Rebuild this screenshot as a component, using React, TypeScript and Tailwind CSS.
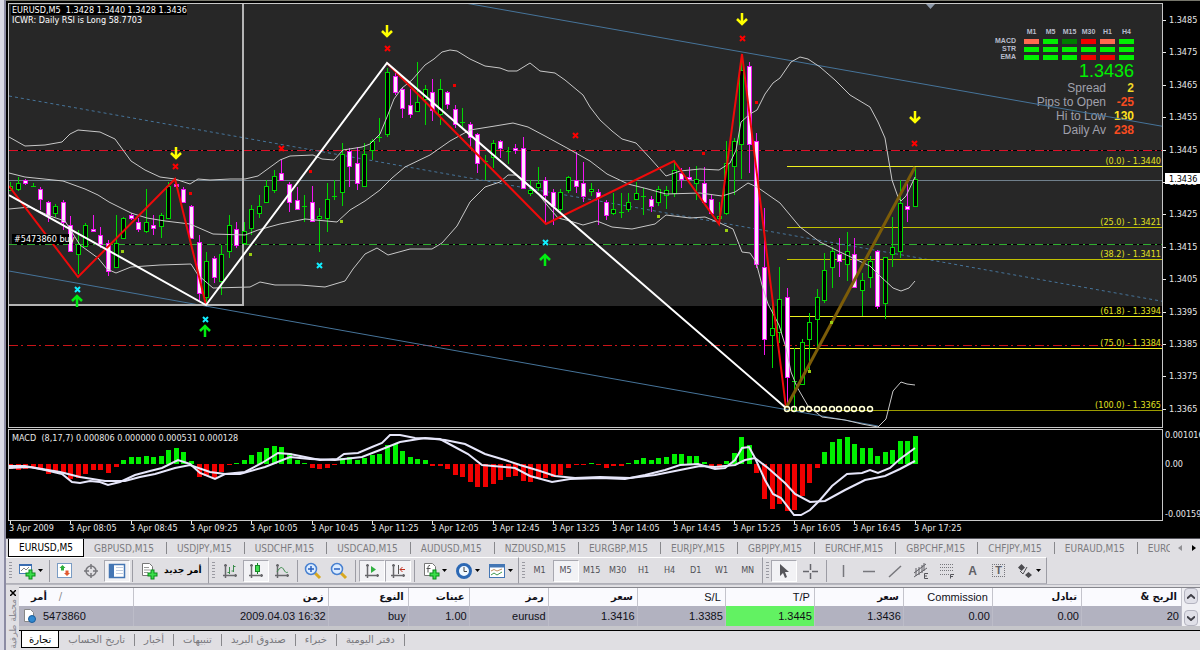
import type { ReactNode } from 'react';
import { clsx } from 'clsx';

type Point = [number, number];
// high, body top, body bottom, low, rising
type Candle = [number, number, number, number, 0 | 1];

const BAR_START = 10;
const BAR_STEP = 7.54;
const barX = (i: number) => Math.round(BAR_START + i * BAR_STEP);

const candles: Candle[] = [
  [182, 186, 190, 191, 1], [177, 183, 189, 191, 1], [179, 180, 183, 185, 0], [183, 186, 186, 187, 1],
  [187, 189, 199, 210, 0], [201, 202, 216, 222, 0], [204, 206, 213, 217, 1], [200, 202, 222, 230, 0],
  [216, 225, 251, 251, 0], [230, 244, 254, 274, 1], [223, 225, 246, 247, 1], [215, 229, 231, 231, 0],
  [227, 235, 244, 248, 0], [240, 243, 271, 276, 0], [215, 243, 267, 268, 1], [217, 218, 238, 239, 1],
  [213, 215, 218, 220, 0], [218, 222, 229, 232, 0], [189, 222, 231, 233, 1], [215, 225, 228, 235, 0],
  [213, 215, 226, 238, 1], [182, 186, 218, 218, 1], [183, 184, 186, 187, 0], [187, 189, 202, 203, 0],
  [205, 206, 238, 238, 0], [235, 242, 293, 302, 0], [252, 261, 297, 302, 1], [256, 258, 277, 283, 0],
  [245, 254, 281, 295, 1], [215, 225, 251, 258, 1], [222, 229, 245, 248, 0], [222, 231, 243, 245, 1],
  [205, 209, 228, 235, 1], [195, 206, 213, 218, 1], [180, 186, 202, 202, 1], [170, 176, 190, 193, 1],
  [159, 173, 180, 180, 0], [182, 184, 202, 212, 0], [187, 200, 209, 210, 0], [195, 206, 206, 222, 1],
  [186, 202, 221, 221, 0], [208, 216, 218, 252, 1], [183, 199, 218, 232, 1], [180, 196, 196, 200, 1],
  [143, 154, 192, 206, 1], [148, 151, 166, 187, 0], [147, 163, 183, 190, 0], [143, 154, 186, 187, 1],
  [139, 141, 150, 160, 1], [118, 137, 137, 142, 1], [68, 72, 134, 137, 1], [73, 76, 92, 95, 0],
  [87, 89, 108, 118, 0], [89, 105, 114, 118, 0], [62, 102, 111, 112, 1], [85, 89, 99, 125, 1],
  [79, 92, 110, 121, 0], [79, 89, 114, 125, 1], [91, 92, 104, 109, 0], [105, 109, 124, 128, 0],
  [108, 122, 122, 127, 1], [122, 124, 137, 147, 0], [133, 134, 163, 173, 0], [155, 161, 161, 180, 1],
  [140, 143, 157, 168, 1], [140, 141, 148, 158, 0], [147, 151, 151, 164, 1], [144, 148, 150, 154, 0],
  [137, 148, 188, 188, 0], [180, 190, 193, 196, 1], [167, 183, 187, 191, 1], [177, 180, 195, 223, 0],
  [189, 192, 206, 225, 0], [189, 192, 209, 212, 1], [176, 177, 190, 193, 1], [152, 180, 186, 193, 0],
  [162, 183, 196, 202, 0], [183, 189, 191, 196, 1], [189, 192, 197, 225, 0], [200, 202, 215, 220, 0],
  [193, 209, 213, 215, 1], [193, 212, 212, 218, 1], [193, 202, 209, 212, 1], [182, 193, 199, 200, 1],
  [188, 196, 196, 215, 1], [196, 199, 206, 212, 0], [186, 189, 202, 206, 1], [186, 190, 195, 209, 1],
  [162, 170, 193, 197, 1], [168, 173, 179, 188, 0], [167, 177, 179, 180, 0], [166, 179, 183, 200, 1],
  [167, 183, 202, 202, 0], [195, 199, 213, 214, 0], [202, 216, 218, 223, 1], [141, 163, 213, 215, 1],
  [138, 141, 166, 195, 1], [55, 70, 144, 179, 1], [62, 66, 144, 173, 0], [133, 141, 264, 268, 0],
  [208, 267, 339, 355, 0], [298, 328, 335, 368, 1], [267, 299, 332, 343, 1], [288, 297, 377, 407, 0],
  [348, 381, 381, 412, 1], [339, 342, 384, 385, 1], [313, 322, 339, 370, 1], [289, 297, 319, 348, 1],
  [253, 270, 300, 303, 1], [247, 251, 267, 288, 1], [238, 254, 261, 277, 0], [232, 251, 264, 281, 1],
  [238, 254, 287, 288, 0], [273, 280, 290, 316, 1], [256, 261, 277, 288, 1], [250, 251, 306, 309, 0],
  [257, 257, 303, 319, 1], [217, 247, 254, 267, 1], [180, 203, 251, 258, 1], [183, 206, 209, 222, 0],
  [167, 179, 206, 206, 1],
];

const upperBand: Point[] = [
  [9, 137], [25, 146], [45, 145], [62, 142], [70, 134], [78, 130], [100, 132], [115, 139], [131, 161], [145, 170],
  [160, 177], [175, 179], [190, 184], [198, 179], [210, 180], [230, 179], [245, 179], [258, 176], [280, 160],
  [290, 156], [313, 155], [322, 159], [334, 160], [343, 150], [362, 147], [370, 144], [380, 134], [387, 117],
  [394, 99], [402, 88], [412, 80], [425, 65], [434, 59], [442, 52], [450, 50], [457, 51], [470, 59], [485, 66],
  [500, 68], [508, 71], [517, 71], [530, 63], [540, 71], [555, 73], [565, 80], [583, 95], [590, 107], [600, 120],
  [612, 131], [622, 139], [636, 143], [650, 158], [666, 176], [680, 171], [700, 169], [719, 170], [730, 163],
  [736, 150], [741, 122], [750, 114], [757, 110], [765, 94], [773, 83], [780, 78], [791, 62], [800, 57],
  [808, 59], [820, 67], [835, 80], [850, 95], [870, 107], [878, 122], [885, 138], [892, 180], [898, 197],
  [901, 201], [906, 196], [915, 177],
];

const middleBand: Point[] = [
  [9, 173], [25, 177], [63, 181], [85, 189], [98, 195], [109, 202], [131, 213], [147, 218], [165, 221], [190, 224],
  [213, 234], [245, 235], [258, 230], [280, 224], [305, 219], [337, 222], [350, 210], [365, 201], [380, 190],
  [392, 178], [405, 167], [430, 155], [450, 141], [470, 130], [495, 126], [513, 123], [528, 127], [545, 136],
  [567, 148], [590, 161], [607, 174], [628, 184], [648, 189], [666, 194], [700, 193], [722, 196], [735, 192],
  [748, 183], [757, 187], [780, 203], [800, 227], [820, 242], [840, 252], [870, 266], [880, 276], [893, 288],
  [901, 291], [909, 288], [915, 281],
];

const lowerBand: Point[] = [
  [9, 209], [30, 207], [50, 216], [65, 221], [80, 245], [98, 258], [107, 269], [116, 273], [131, 267], [160, 265],
  [191, 264], [198, 275], [213, 288], [250, 287], [260, 282], [275, 285], [300, 285], [325, 287], [345, 281],
  [353, 269], [365, 254], [377, 248], [388, 255], [410, 249], [432, 249], [442, 243], [457, 226], [470, 202],
  [485, 187], [500, 182], [508, 175], [516, 175], [535, 190], [547, 205], [558, 218], [570, 221], [583, 225],
  [597, 221], [612, 227], [632, 229], [655, 224], [666, 215], [690, 218], [705, 217], [720, 223], [733, 229],
  [742, 252], [750, 253], [756, 262], [762, 285], [768, 304], [779, 325], [786, 348], [791, 372], [797, 387],
  [808, 406], [822, 417], [845, 420], [862, 424], [878, 427], [886, 419], [893, 391], [901, 382], [907, 384],
  [915, 385],
];

const whiteZigzag: Point[] = [[9, 195], [206, 305], [387, 63], [786, 408]];
const redSwings: Point[][] = [
  [[9, 186], [78, 277], [175, 179], [206, 305]],
  [[387, 63], [546, 224], [674, 161], [719, 224], [742, 54], [786, 408]],
];

const fibs = [
  { y: 166, label: '(0.0) - 1.3440', color: '#f0f020' },
  { y: 227, label: '(25.0) - 1.3421', color: '#c0c000' },
  { y: 259, label: '(38.2) - 1.3411', color: '#c0c000' },
  { y: 316, label: '(61.8) - 1.3394', color: '#f0f020' },
  { y: 348, label: '(75.0) - 1.3384', color: '#f0f020' },
  { y: 410, label: '(100.0) - 1.3365', color: '#9c9c00' },
];

const sellArrows: Point[] = [[176, 153], [387, 31], [742, 19], [915, 117]];
const buyArrows: Point[] = [[77, 300], [205, 330], [545, 259]];
const redCrosses: Point[] = [[175, 166], [281, 148], [387, 48], [575, 135], [742, 38], [914, 143]];
const cyanCrosses: Point[] = [[77, 289], [205, 319], [319, 265], [545, 242]];
const redDots: Point[] = [[190, 193], [310, 171], [454, 85], [703, 153], [756, 102]];
const limeDots: Point[] = [[122, 251], [250, 254], [341, 221], [658, 216], [726, 230], [809, 371], [831, 322]];

const macdBars = [
  -5, -6, -5, -4, -5, -10, -8, -9, -15, -14, -10, -6, -6, -9, -3, 4, 7, 7, 8, 7, 8, 14, 16, 12, 3, -13, -12, -14, -8,
  -1, 1, 4, 9, 12, 16, 18, 17, 11, 4, 1, -4, -5, -4, -1, 6, 7, 4, 6, 9, 10, 19, 20, 13, 7, 5, 4, -2, -2, -5, -11,
  -13, -18, -23, -23, -20, -16, -13, -12, -17, -18, -14, -14, -13, -11, -4, -1, -1, 1, -1, -4, -2, -2, 1, 4, 6, 4, 6,
  7, 10, 10, 8, 8, 2, -2, -4, 3, 11, 27, 19, -9, -35, -45, -40, -47, -46, -32, -19, -4, 12, 22, 25, 27, 20, 16, 16,
  8, 12, 14, 23, 23, 28,
];

const macdLine: Point[] = [
  [9, 466], [25, 466], [45, 470], [62, 474], [72, 482], [80, 483], [90, 481], [100, 482], [108, 485], [120, 482],
  [135, 475], [150, 471], [162, 468], [178, 460], [190, 464], [200, 473], [215, 479], [225, 474], [245, 472],
  [262, 463], [278, 453], [290, 454], [305, 457], [320, 460], [337, 459], [344, 454], [358, 453], [372, 447],
  [382, 443], [390, 435], [400, 435], [415, 438], [440, 439], [453, 446], [468, 454], [482, 465], [515, 468],
  [530, 476], [552, 482], [570, 479], [600, 478], [625, 479], [645, 475], [665, 470], [680, 465], [698, 464],
  [715, 469], [725, 468], [735, 460], [742, 448], [749, 447], [755, 458], [765, 480], [773, 494], [781, 498],
  [794, 515], [801, 515], [810, 510], [820, 500], [832, 486], [847, 474], [862, 473], [870, 470], [878, 473],
  [890, 468], [900, 459], [915, 448],
];

const signalLine: Point[] = [
  [9, 468], [30, 467], [60, 472], [80, 477], [105, 481], [125, 481], [140, 477], [155, 474], [175, 468], [190, 465],
  [210, 472], [225, 474], [240, 474], [265, 467], [290, 457], [310, 459], [335, 460], [362, 457], [380, 450],
  [400, 442], [425, 438], [445, 440], [465, 444], [485, 454], [505, 460], [520, 465], [540, 471], [555, 476],
  [575, 478], [600, 477], [630, 478], [655, 475], [680, 470], [700, 466], [715, 467], [735, 465], [745, 460],
  [755, 458], [768, 468], [785, 483], [795, 494], [810, 502], [825, 501], [845, 490], [865, 480], [885, 476],
  [900, 469], [915, 461],
];

const times = [
  '3 Apr 2009', '3 Apr 08:05', '3 Apr 08:45', '3 Apr 09:25', '3 Apr 10:05', '3 Apr 10:45', '3 Apr 11:25', '3 Apr 12:05',
  '3 Apr 12:45', '3 Apr 13:25', '3 Apr 14:05', '3 Apr 14:45', '3 Apr 15:25', '3 Apr 16:05', '3 Apr 16:45', '3 Apr 17:25',
];

const prices = [
  '1.3485', '1.3475', '1.3465', '1.3455', '1.3445', '1.3435', '1.3425', '1.3415', '1.3405', '1.3395', '1.3385', '1.3375',
  '1.3365',
];

const path = (points: Point[]) => points.map((p) => p.join(',')).join(' ');

const chartText = "font-['DejaVu_Sans_Condensed','DejaVu_Sans',sans-serif] text-[9px]";

function Cross({ at: [x, y], color }: { at: Point; color: string }) {
  return <path d={`M${x - 2} ${y - 2}l5 5m0 -5l-5 5`} stroke={color} strokeWidth="2" />;
}

function PriceChart() {
  return (
    <svg className={clsx('relative block h-full w-full overflow-hidden', chartText)} role="img" aria-label="EURUSD M5">
      <g transform="translate(-9 -4)" fill="none">
        <line x1="9" x2="110%" y1="180.5" y2="180.5" stroke="#70808c" />
        {[150, 345].map((y) => (
          <g key={y}>
            <line x1="9" x2="110%" y1={y + 0.5} y2={y + 0.5} stroke="#000" />
            <line x1="9" x2="110%" y1={y + 0.5} y2={y + 0.5} stroke={y === 150 ? '#e01028' : '#c81418'} strokeDasharray="9 3 2 4" />
          </g>
        ))}
        <line x1="9" x2="110%" y1="244.5" y2="244.5" stroke="#000" />
        <line x1="9" x2="110%" y1="244.5" y2="244.5" stroke="#2fae2f" strokeDasharray="8 4 2 4" />

        {/* regression channel */}
        <g stroke="#46749a">
          <line x1="465" y1="3" x2="1172" y2="128" />
          <line x1="9" y1="271" x2="878" y2="426" />
          <line x1="9" y1="96" x2="1172" y2="303" strokeDasharray="3 3" />
        </g>

        <path d="M9 305H243V4" stroke="#b4b4b4" strokeWidth="2" />

        {fibs.map((f) => (
          <line key={f.y} x1="787" x2="110%" y1={f.y + 0.5} y2={f.y + 0.5} stroke={f.color} />
        ))}

        <g shapeRendering="crispEdges">
          {candles.map(([high, top, bottom, low, up], i) => {
            const x = barX(i);
            const color = up ? '#00d800' : '#f414f4';
            return (
              <g key={i} stroke={color}>
                <line x1={x + 0.5} x2={x + 0.5} y1={high} y2={low} />
                {top === bottom ? (
                  <line x1={x - 2} x2={x + 3} y1={top + 0.5} y2={top + 0.5} />
                ) : (
                  <rect x={x - 1.5} y={top + 0.5} width="4" height={bottom - top} fill={up ? '#000' : '#ffe4ff'} />
                )}
              </g>
            );
          })}
        </g>

        <g stroke="#c8c8c8">
          <polyline points={path(upperBand)} />
          <polyline points={path(middleBand)} />
          <polyline points={path(lowerBand)} />
        </g>

        {redSwings.map((swing, i) => <polyline key={i} points={path(swing)} stroke="#ee0a0a" strokeWidth="2" />)}
        <polyline points={path(whiteZigzag)} stroke="#fff" strokeWidth="2" />
        <line x1="786" y1="408" x2="915" y2="167" stroke="#7c5c08" strokeWidth="3" />

        {Array.from({ length: 12 }, (_, i) => (
          <circle key={i} cx={barX(103 + i)} cy="409" r="2.5" stroke="#ffffd8" strokeWidth="1.5" />
        ))}

        {sellArrows.map(([x, y]) => (
          <path key={x} d={`M${x} ${y - 6}v10M${x - 5} ${y}l5 5l5 -5`} stroke="#ff0" strokeWidth="2.5" />
        ))}
        {buyArrows.map(([x, y]) => (
          <path key={x} d={`M${x} ${y + 7}v-10M${x - 5} ${y + 1}l5 -5l5 5`} stroke="#0e1" strokeWidth="2.5" />
        ))}
        {redCrosses.map((p) => <Cross key={p[0]} at={p} color="#f00" />)}
        {cyanCrosses.map((p) => <Cross key={p[0]} at={p} color="#1ef" />)}
        {redDots.map(([x, y]) => <rect key={x} x={x - 1} y={y - 1} width="3" height="3" fill="#e00" />)}
        {limeDots.map(([x, y]) => <rect key={x} x={x - 1} y={y - 1} width="3" height="3" fill="#9c1" />)}
        <path d="M926 4h9l-4.500 5z" fill="#8c98a8" />

        <rect x="11" y="5" width="176" height="10" fill="#000" />
        <rect x="12" y="234" width="57" height="10" fill="#000" />
        <g fill="#fff">
          <text x="12" y="13" xmlSpace="preserve">EURUSD,M5  1.3428 1.3440 1.3428 1.3436</text>
          <text x="12" y="23">ICWR: Daily RSI is Long 58.7703</text>
          <text x="14" y="242">#5473860 buy</text>
        </g>
      </g>
      <g transform="translate(-1 -4)" fill="#e0e020" textAnchor="end">
        {fibs.map((f) => <text key={f.y} x="100%" y={f.y - 2}>{f.label}</text>)}
      </g>
    </svg>
  );
}

const signals = [
  { name: 'MACD', cells: ['bg-[#ff6a50]', 'bg-[#00f000]', 'bg-[#007c00]', 'bg-[#f00000]', 'bg-[#ff6a50]', 'bg-[#00f000]'] },
  { name: 'STR', cells: ['bg-[#00f000]', 'bg-[#00f000]', 'bg-[#00f000]', 'bg-[#00f000]', 'bg-[#00f000]', 'bg-[#00f000]'] },
  { name: 'EMA', cells: ['bg-[#00f000]', 'bg-[#00f000]', 'bg-[#00f000]', 'bg-[#f00000]', 'bg-[#f00000]', 'bg-[#00f000]'] },
];

const stats = [
  { label: 'Spread', value: '2', color: 'text-[#f0d828]' },
  { label: 'Pips to Open', value: '-25', color: 'text-[#f84c20]' },
  { label: 'Hi to Low', value: '130', color: 'text-[#ffe020]' },
  { label: 'Daily Av', value: '238', color: 'text-[#f84c20]' },
];

function SignalPanel() {
  return (
    <div className="absolute top-6 right-7 flex flex-col items-end font-['Liberation_Sans',sans-serif]">
      <div className="grid grid-cols-[30px_repeat(6,15px)] gap-x-1 text-[7px] leading-[8px] font-bold text-[#b8bccc]">
        <span />
        {['M1', 'M5', 'M15', 'M30', 'H1', 'H4'].map((tf) => (
          <span key={tf} className="pb-px text-center">{tf}</span>
        ))}
        {signals.map((row) => (
          <div key={row.name} className="contents">
            <span className="pr-1 text-right">{row.name}</span>
            {row.cells.map((c, i) => <span key={i} className={clsx('mt-[2px] h-[5px]', c)} />)}
          </div>
        ))}
      </div>
      <div className="text-lg leading-[20px] text-[#00f000]">1.3436</div>
      <dl className="grid grid-cols-[auto_20px] gap-x-2 text-right text-xs leading-[14px] text-[#a0a0ac]">
        {stats.map((s) => (
          <div key={s.label} className="contents">
            <dt>{s.label}</dt>
            <dd className={clsx('font-bold', s.color)}>{s.value}</dd>
          </div>
        ))}
      </dl>
    </div>
  );
}

function PriceAxis() {
  return (
    <svg className={clsx('block h-[425px] w-[37px] shrink-0', chartText)} fill="#e8e8e8">
      {prices.map((p, i) => {
        const y = Math.round(17 + i * 32.4);
        return (
          <g key={p}>
            <rect x="0" y={y} width="3" height="1" />
            <text x="6" y={y + 3}>{p}</text>
          </g>
        );
      })}
      <rect x="2" y="170" width="35" height="11" fill="#fff" />
      <text x="6" y="179" fill="#000">1.3436</text>
    </svg>
  );
}

function MacdChart() {
  return (
    <svg className={clsx('block h-full w-full overflow-hidden', chartText)} role="img" aria-label="MACD">
      <g transform="translate(-9 -430)">
        {macdBars.map((v, i) => (
          <rect
            key={i}
            x={barX(i) - 2}
            y={v > 0 ? 464 - v : 464}
            width="5"
            height={Math.abs(v)}
            fill={v > 0 ? '#00f000' : '#f00000'}
          />
        ))}
        <g fill="none" stroke="#e6e6fa" strokeWidth="2">
          <polyline points={path(macdLine)} />
          <polyline points={path(signalLine)} />
        </g>
        <text x="12" y="441" fill="#e8e8e8" xmlSpace="preserve">MACD  (8,17,7) 0.000806 0.000000 0.000531 0.000128</text>
      </g>
    </svg>
  );
}

function Chart() {
  return (
    <section className="border-t border-[#77776c] bg-black pt-[2px] pl-[2px]">
      <div className="flex">
        <div className="relative h-[425px] min-w-0 flex-1 border border-[#c8c8c8] bg-[linear-gradient(#272727_302px,#000_302px)]">
          <SignalPanel />
          <PriceChart />
        </div>
        <PriceAxis />
      </div>
      <div className="mt-px flex">
        <div className="h-[92px] min-w-0 flex-1 border border-[#c8c8c8]">
          <MacdChart />
        </div>
        <div className={clsx('flex h-[92px] w-[37px] shrink-0 flex-col justify-between overflow-hidden whitespace-nowrap pb-px pl-[2px] leading-[12px] text-[#e8e8e8]', chartText)}>
          <span>0.001016</span>
          <span className="pb-[22px]">0.00</span>
          <span>-0.00159</span>
        </div>
      </div>
      <svg className={clsx('block h-[17px] w-full', chartText)} fill="#e8e8e8">
        {times.map((t, i) => (
          <g key={t}>
            <rect x={barX(i * 8) - 8} y="0" width="1" height="3" />
            <text x={barX(i * 8) - 9} y="10">{t}</text>
          </g>
        ))}
      </svg>
    </section>
  );
}

const symbols = [
  'EURUSD,M5', 'GBPUSD,M15', 'USDJPY,M15', 'USDCHF,M15', 'USDCAD,M15', 'AUDUSD,M15', 'NZDUSD,M15', 'EURGBP,M15',
  'EURJPY,M15', 'GBPJPY,M15', 'EURCHF,M15', 'GBPCHF,M15', 'CHFJPY,M15', 'EURAUD,M15', 'EURCAD,M15',
];

function SymbolTabs() {
  return (
    <nav className="flex h-[19px] border-t border-[#55555c] pl-[2px] font-['DejaVu_Sans_Condensed','DejaVu_Sans',sans-serif] text-[10px]">
      <div className="flex min-w-0 flex-1 overflow-hidden">
        {symbols.map((s, i) => (
          <button
            key={s}
            className={clsx(
              'flex shrink-0 items-center whitespace-nowrap',
              i === 0 ? 'border-x border-b border-black bg-white px-[10px] text-black' : 'pl-[10px] text-[#7c7c80]',
            )}
          >
            {s}
            {i > 0 && <span className="ml-3 h-3 w-px bg-[#88888c]" />}
          </button>
        ))}
      </div>
      <div className="flex w-[30px] items-center justify-between pr-1 pl-2">
        <button aria-label="Previous charts">
          <svg width="4" height="6"><path d="M4 0v6L0 3z" fill="#909094" /></svg>
        </button>
        <button aria-label="Next charts">
          <svg width="4" height="6"><path d="M0 0v6l4-3z" fill="#000" /></svg>
        </button>
      </div>
    </nav>
  );
}

function Icon({ children }: { children: ReactNode }) {
  return <svg width="18" height="18" viewBox="0 0 18 18" fill="none" className="shrink-0">{children}</svg>;
}

const plus = <path d="M7.500 12.500h10M12.500 7.500v10" stroke="#0a8a1a" strokeWidth="4" />;
const plusFill = <path d="M8.500 12.500h8M12.500 8.500v8" stroke="#3ade4a" strokeWidth="2" />;
const axes = <path d="M4.500 2v14M2 13.500h14M3 3.500h3M14.500 12v3" stroke="#68686c" strokeWidth="1.500" />;

const icons = {
  newChart: <Icon><rect x="1.500" y="2.500" width="12" height="9" fill="#fff" stroke="#4a7cb8" /><path d="M1 3h13" stroke="#3a6cb0" strokeWidth="2" /><path d="M3 9l3-3 2 2 3-3" stroke="#888" />{plus}{plusFill}</Icon>,
  marketWatch: <Icon><rect x="1.500" y="1.500" width="14" height="14" fill="#fff" stroke="#7a9cc4" /><path d="M6.500 3l3 3h-1.500v2.500h-3V6H3.500z" fill="#2cae3c" /><path d="M11 14l3-3h-1.500V8.500h-3V11H8z" fill="#e05a30" /></Icon>,
  navigator: <Icon><circle cx="9" cy="9" r="5" stroke="#77777c" strokeWidth="1.500" /><path d="M9 2v5M9 11v5M2 9h5M11 9h5" stroke="#77777c" strokeWidth="1.500" /></Icon>,
  terminal: <Icon><rect x="1.500" y="2.500" width="15" height="13" fill="#fff" stroke="#4476b4" strokeWidth="1.500" /><path d="M4 2.500v13" stroke="#4476b4" strokeWidth="4" /><path d="M8 5.500h7M8 8.500h7M8 11.500h7" stroke="#c0cce0" /></Icon>,
  newOrder: <Icon><path d="M2.500 1.500h7l3 3v9h-10z" fill="#fff" stroke="#777" /><path d="M4 5.500h5M4 8h6M4 10.500h4" stroke="#999" />{plus}{plusFill}</Icon>,
  bars: <Icon>{axes}<path d="M8.500 5v7M6.500 10.500h2M12.500 3v7M12.500 4.500h2M10.500 9h2" stroke="#3c8c4c" /></Icon>,
  candles: <Icon>{axes}<path d="M10.500 1v11" stroke="#188828" /><rect x="8.500" y="3.500" width="4" height="6" fill="#40dc50" stroke="#188828" /></Icon>,
  line: <Icon>{axes}<path d="M4 10c3-5 5-6 7-2s4 2 4 2" stroke="#3c8c4c" /></Icon>,
  zoomIn: <Icon><path d="M11 11l5 5" stroke="#d8a820" strokeWidth="3" /><circle cx="7" cy="7" r="5.500" fill="#dcecff" stroke="#4880d0" strokeWidth="1.500" /><path d="M4 7h6M7 4v6" stroke="#2860c0" strokeWidth="1.500" /></Icon>,
  zoomOut: <Icon><path d="M11 11l5 5" stroke="#d8a820" strokeWidth="3" /><circle cx="7" cy="7" r="5.500" fill="#dcecff" stroke="#4880d0" strokeWidth="1.500" /><path d="M4 7h6" stroke="#2860c0" strokeWidth="1.500" /></Icon>,
  scroll: <Icon>{axes}<path d="M8 4l5 3.500-5 3.500z" fill="#30b040" /></Icon>,
  shift: <Icon>{axes}<path d="M9.500 3v9" stroke="#555" /><path d="M16 7.500h-5M13.500 5l-2.500 2.500 2.500 2.500" stroke="#c03020" /></Icon>,
  indicators: <Icon><path d="M2.500 1.500h8l3 3v9h-11z" fill="#fff" stroke="#777" /><path d="M8 3.500c-2 0-2 1-2 3v4M4.500 6.500h4" stroke="#555" />{plus}{plusFill}</Icon>,
  periods: <Icon><circle cx="9" cy="9" r="6.500" fill="#f0f8ff" stroke="#2c68b4" strokeWidth="3" /><path d="M9 5v4.500h3" stroke="#444" /></Icon>,
  templates: <Icon><rect x="1.500" y="2.500" width="15" height="13" fill="#fff" stroke="#4476b4" /><path d="M1 4h16" stroke="#4476b4" strokeWidth="3" /><path d="M3 9l3-1.500 3 1.500 5-2" stroke="#c09060" /><path d="M3 13l3-2 3 2 5-3" stroke="#409850" /></Icon>,
  cursor: <Icon><path d="M5 2v12l3-3 2 5 2-1-2-5h4z" fill="#55555a" /></Icon>,
  crosshair: <Icon><path d="M9.500 2v6M9.500 11v6M2 9.500h6M11 9.500h6" stroke="#66666c" strokeWidth="1.500" /></Icon>,
  vline: <Icon><path d="M9.500 3v12" stroke="#77777c" strokeWidth="1.500" /></Icon>,
  hline: <Icon><path d="M3 9.500h12" stroke="#77777c" strokeWidth="1.500" /></Icon>,
  trend: <Icon><path d="M3 15L15 4" stroke="#77777c" strokeWidth="1.500" /></Icon>,
  channel: <Icon><path d="M2 11L14 2M2 15L15 6M4 6v8M7 5v8M10 3v8M12 1v8" stroke="#606066" /><path d="M16 11.500h-3.500v5H16M12.500 14H15" stroke="#55555a" /></Icon>,
  fibo: <Icon><path d="M2 2.500h14M2 5.500h14M2 8.500h14M2 12.500h9" stroke="#77777c" strokeDasharray="1 1" /><path d="M16 12.500h-3.500v4M12.500 14.500H15" stroke="#55555a" /></Icon>,
  arrows: <Icon><path d="M2 5.500l3.500-3.500 3.500 3.500-3.500 3.500zM9 13l3.500-3 3.500 3-3.500 3z" fill="#4c4c50" /><path d="M4 9l3 3M11 5l-4 7" stroke="#4c4c50" /></Icon>,
};

function ToolButton({ label, pressed, menu, children }: { label: string; pressed?: boolean; menu?: boolean; children: ReactNode }) {
  return (
    <button
      aria-label={label}
      aria-pressed={pressed}
      className={clsx(
        'flex h-[22px] shrink-0 items-center justify-center gap-[2px]',
        menu ? 'w-[33px]' : 'w-[26px]',
        pressed && 'border border-[#a8a8b0] border-r-white border-b-white bg-[#f2f2f5]',
      )}
    >
      {children}
      {menu && <svg width="5" height="3" className="shrink-0"><path d="M0 0h5L2.500 3z" fill="#000" /></svg>}
    </button>
  );
}

const Grip = () => (
  <span className="mr-[2px] h-[18px] w-[3px] shrink-0 bg-[repeating-linear-gradient(to_bottom,#9a9aa2_0_1px,transparent_1px_3px)]" />
);
const Sep = ({ wide }: { wide?: boolean }) => (
  <span className={clsx('h-[22px] w-px shrink-0 bg-[#9c9ca4]', wide ? 'mx-[3px]' : 'mx-[2px]')} />
);

function ToolGroup({ children }: { children: ReactNode }) {
  return (
    <div className="flex shrink-0 items-center border-t border-r border-b border-t-white border-r-[#9c9ca4] border-b-[#b0b0b8] pr-px pl-[3px]">
      {children}
    </div>
  );
}

function Toolbar() {
  return (
    <div className="flex h-[28px] overflow-hidden border-b border-[#b8b8c0]" role="toolbar">
      <ToolGroup>
        <Grip />
        <ToolButton label="New chart" menu>{icons.newChart}</ToolButton>
        <Sep />
        <ToolButton label="Market watch">{icons.marketWatch}</ToolButton>
        <ToolButton label="Navigator">{icons.navigator}</ToolButton>
        <ToolButton label="Terminal" pressed>{icons.terminal}</ToolButton>
        <Sep />
        <button className="flex items-center gap-[6px] px-[5px] font-['DejaVu_Sans',sans-serif] text-[9px] font-bold" lang="ar">
          {icons.newOrder}
          <span dir="rtl">أمر جديد</span>
        </button>
      </ToolGroup>
      <ToolGroup>
        <Grip />
        <ToolButton label="Bar chart">{icons.bars}</ToolButton>
        <ToolButton label="Candlesticks" pressed>{icons.candles}</ToolButton>
        <ToolButton label="Line chart">{icons.line}</ToolButton>
        <Sep />
        <ToolButton label="Zoom in">{icons.zoomIn}</ToolButton>
        <ToolButton label="Zoom out">{icons.zoomOut}</ToolButton>
        <Sep wide />
        <ToolButton label="Auto scroll" pressed>{icons.scroll}</ToolButton>
        <ToolButton label="Chart shift" pressed>{icons.shift}</ToolButton>
        <Sep wide />
        <ToolButton label="Indicators" menu>{icons.indicators}</ToolButton>
        <ToolButton label="Periods" menu>{icons.periods}</ToolButton>
        <ToolButton label="Templates" menu>{icons.templates}</ToolButton>
      </ToolGroup>
      <ToolGroup>
        <Grip />
        {['M1', 'M5', 'M15', 'M30', 'H1', 'H4', 'D1', 'W1', 'MN'].map((tf) => (
          <ToolButton key={tf} label={tf} pressed={tf === 'M5'}>
            <span className="font-['DejaVu_Sans_Condensed','DejaVu_Sans',sans-serif] text-[9px] text-[#505056]">{tf}</span>
          </ToolButton>
        ))}
      </ToolGroup>
      <ToolGroup>
        <Grip />
        <ToolButton label="Cursor" pressed>{icons.cursor}</ToolButton>
        <ToolButton label="Crosshair">{icons.crosshair}</ToolButton>
        <Sep wide />
        <ToolButton label="Vertical line">{icons.vline}</ToolButton>
        <ToolButton label="Horizontal line">{icons.hline}</ToolButton>
        <ToolButton label="Trendline">{icons.trend}</ToolButton>
        <ToolButton label="Equidistant channel">{icons.channel}</ToolButton>
        <ToolButton label="Fibonacci">{icons.fibo}</ToolButton>
        <ToolButton label="Text">
          <span className="font-['Liberation_Sans',sans-serif] text-xs font-bold text-[#606066]">A</span>
        </ToolButton>
        <ToolButton label="Text label">
          <span className="border border-dotted border-[#77777c] px-[2px] font-['Liberation_Sans',sans-serif] text-[11px] leading-[11px] font-bold text-[#606066]">T</span>
        </ToolButton>
        <ToolButton label="Arrows" menu>{icons.arrows}</ToolButton>
      </ToolGroup>
    </div>
  );
}

const columns = [
  { head: 'أمر', value: '5473860', width: 'w-[114px]' },
  { head: 'زمن', value: '2009.04.03 16:32', width: 'w-[195px]' },
  { head: 'النوع', value: 'buy', width: 'w-[80px]' },
  { head: 'عينات', value: '1.00', width: 'w-[61px]' },
  { head: 'رمز', value: 'eurusd', width: 'w-[79px]' },
  { head: 'سعر', value: '1.3416', width: 'w-[89px]' },
  { head: 'S/L', value: '1.3385', width: 'w-[88px]' },
  { head: 'T/P', value: '1.3445', width: 'w-[89px]' },
  { head: 'سعر', value: '1.3436', width: 'w-[89px]' },
  { head: 'Commission', value: '0.00', width: 'w-[89px]' },
  { head: 'تبادل', value: '0.00', width: 'w-[89px]' },
  { head: 'الربح &', value: '20', width: 'w-[100px]' },
];

const isLatin = (s: string) => /^[A-Z]/.test(s);

function OrdersTable() {
  return (
    <div className="flex border-t border-[#85858c] bg-[#c6c6ca]">
      <table className="h-[38px] min-w-0 flex-1 table-fixed border-collapse text-right font-['Liberation_Sans',sans-serif] text-[11px] leading-[14px] text-[#101018]">
        <thead>
          <tr className="h-[18px] bg-[#fafafe]">
            {columns.map((c, i) => (
              <th
                key={i}
                className={clsx(
                  'border-r border-[#c4c4cc] p-0',
                  c.width,
                  i === 0 ? 'pl-3 text-left' : 'pr-1 text-right',
                  isLatin(c.head) ? 'font-normal' : "font-['DejaVu_Sans',sans-serif] text-[10px] font-bold",
                )}
              >
                <span dir={isLatin(c.head) ? 'ltr' : 'rtl'}>{c.head}</span>
                {i === 0 && <span className="pl-3 font-normal text-[#88888c]">/</span>}
              </th>
            ))}
          </tr>
        </thead>
        <tbody>
          <tr className="h-[20px] bg-[#b2b2c0]">
            {columns.map((c, i) => (
              <td
                key={i}
                className={clsx('border-r border-[#bcbcc8] p-0', i === 0 ? 'pl-1 text-left' : 'pr-[2px]', c.head === 'T/P' && 'bg-[#62f262]')}
              >
                {i === 0 ? (
                  <span className="flex items-center gap-[7px]">
                    <svg width="13" height="14" viewBox="0 0 13 14">
                      <path d="M1.500.5h6l3 3v9h-9z" fill="#fff" stroke="#888" />
                      <circle cx="9" cy="10" r="3.500" fill="#3088d0" stroke="#1c5c98" />
                    </svg>
                    {c.value}
                  </span>
                ) : (
                  c.value
                )}
              </td>
            ))}
          </tr>
        </tbody>
      </table>
      <div className="flex w-[18px] shrink-0 flex-col items-center justify-between bg-[#f0f0f4]">
        {['Scroll up', 'Scroll down'].map((label) => (
          <button key={label} aria-label={label} className="flex h-[16px] w-[14px] items-center justify-center rounded-sm border border-[#b4b4c0] bg-[#e0e0e8]">
            <svg width="8" height="5" fill="none" stroke="#404048" strokeWidth="2">
              <path d={label === 'Scroll up' ? 'M0 4.500l4-3.500 4 3.500' : 'M0 .5l4 3.500 4-3.500'} />
            </svg>
          </button>
        ))}
      </div>
    </div>
  );
}

const terminalTabs = ['تجارة', 'تاريخ الحساب', 'أخبار', 'تنبيهات', 'صندوق البريد', 'خبراء', 'دفتر اليومية'];

function Terminal() {
  return (
    <section className="mt-[2px] flex flex-1" lang="ar">
      <div className="flex w-[13px] shrink-0 flex-col items-center overflow-hidden">
        <button aria-label="Close" className="my-[3px]">
          <svg width="6" height="6"><path d="M0 0l6 6M6 0l-6 6" stroke="#000" strokeWidth="1.500" /></svg>
        </button>
        <span className="rotate-180 font-['DejaVu_Sans',sans-serif] text-[9px] leading-[12px] whitespace-nowrap text-[#8c8c94] [writing-mode:vertical-rl]">محطة طرفية</span>
      </div>
      <div className="min-w-0 flex-1">
        <OrdersTable />
        <div className="h-[4px] bg-[#c6c6ca]" />
        <nav className="flex h-[18px] border-t border-black pl-[2px] font-['DejaVu_Sans',sans-serif] text-[10px]">
          {terminalTabs.map((t, i) => (
            <button
              key={t}
              className={clsx(
                'flex items-center whitespace-nowrap',
                i === 0 ? 'border-x border-b border-black bg-white px-[7px] text-black' : 'pl-[9px] text-[#77777c]',
              )}
            >
              <span dir="rtl">{t}</span>
              {i > 0 && <span className="ml-[9px] h-3 w-px bg-[#88888c]" />}
            </button>
          ))}
        </nav>
      </div>
    </section>
  );
}

export default function App() {
  return (
    <div className="flex min-h-screen bg-[#e0dfe3]">
      <div className="w-[6px] shrink-0 border-r-2 border-[#8c8ca4] bg-[#d8d8e4]" />
      <main className="flex min-w-0 flex-1 flex-col">
        <Chart />
        <SymbolTabs />
        <Toolbar />
        <Terminal />
      </main>
    </div>
  );
}
